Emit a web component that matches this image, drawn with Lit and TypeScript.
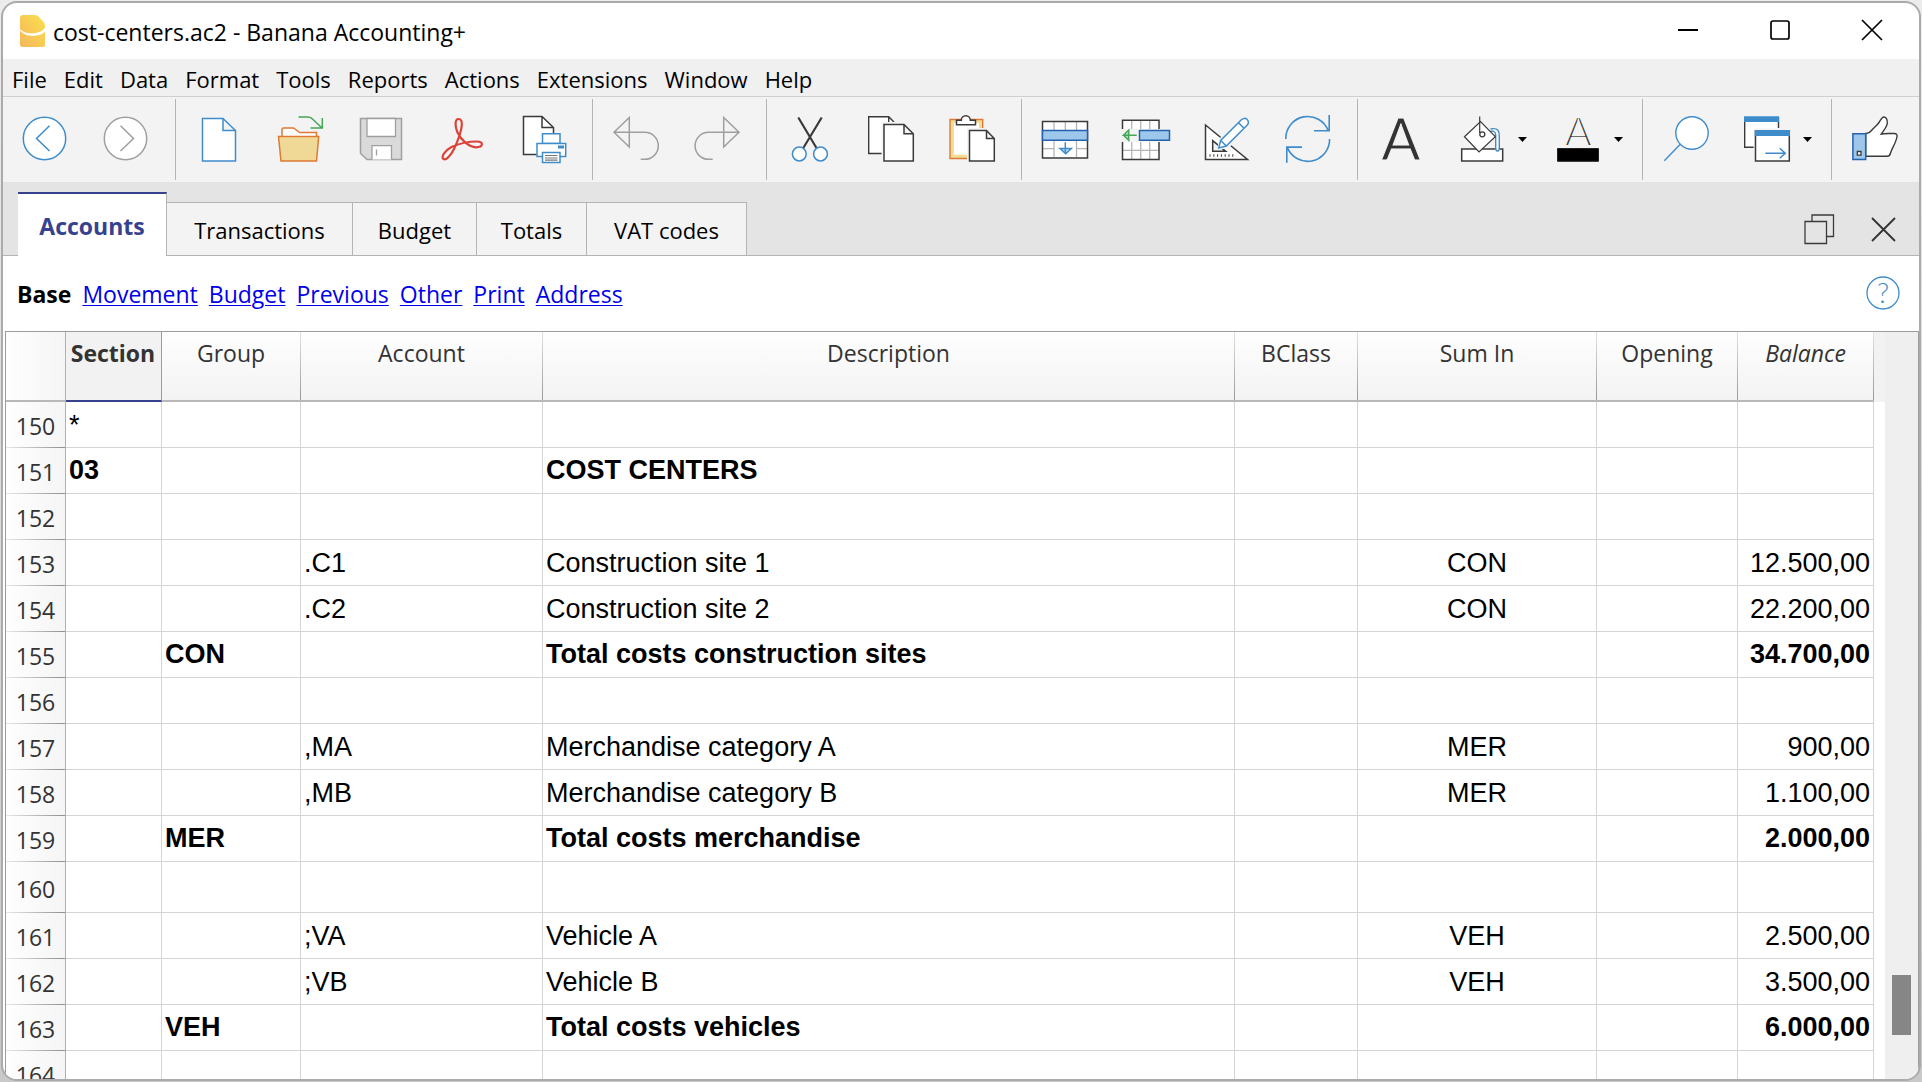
import { LitElement, html, svg, css, nothing } from "lit";
import type { SVGTemplateResult } from "lit";
import { customElement, property, state } from "lit/decorators.js";
import { classMap } from "lit/directives/class-map.js";

const BLUE = "#3f8ccb";
const DARK = "#3a3a3a";
const GREY = "#9f9f9f";

const icons: Record<string, SVGTemplateResult> = {
  back: svg`<g stroke=${BLUE} stroke-width="1.5">
    <circle cx="24.5" cy="23.5" r="21.2" fill="#fff"/><path d="M29.5 10.7L16.5 23.5L29.5 36"/></g>`,
  forward: svg`<g stroke=${GREY} stroke-width="1.5">
    <circle cx="24.5" cy="23.5" r="21.2" fill="#fff"/><path d="M19.5 10.7L32.5 23.5L19.5 36"/></g>`,
  create: svg`<path d="M8.5 3.5H29L41.5 15.5V46H8.5Z M29 3.5V15.5H41.5" fill="#fff" stroke=${BLUE} stroke-width="1.5"/>`,
  open: svg`<path d="M7 21.500V14.500Q7 13 8.500 13H18Q19 13 20 14L24.500 17.500H41.500V21.500" fill="#fff" stroke="#dd7a35" stroke-width="1.5"/>
    <path d="M3.500 21.500H43.700L41.500 46H6Z" fill="#f0d996" stroke="#dd7a35" stroke-width="1.5"/>
    <path d="M23.500 2H33Q36 2 38 4.500L47 13M47.300 3V13H35.500" stroke="#46a758" stroke-width="1.5"/>`,
  save: svg`<path d="M4.500 3.500H45.500V44.500H11L4.500 38.500Z" fill="#dadada" stroke=${GREY} stroke-width="1.5"/>
    <path d="M11 3.500H39.500V21.500H11ZM16 44.500V30.700H35.500V44.500" fill="#fff" stroke=${GREY} stroke-width="1.3"/>
    <path d="M20.500 34.500V40.500" stroke=${GREY} stroke-width="1.3"/>`,
  pdf: svg`<path d="M21.500 4C17.500 4 18 12 20.500 17.500C24 25 32 32 39 32.300C46.500 32.300 47 26.500 40 26.500C31 26.500 21 29 14.500 32C8 35.500 3.500 42 6.500 44C9 46 14 40 17 34C20 28 24.500 16 24.800 10C25 6 24 4 21.500 4Z" stroke="#dc4238" stroke-width="2.200"/>`,
  print: svg`<path d="M18.500 39.500H5.500V1.500H23L35.500 13V39.500Z" fill="#fff"/>
    <path d="M18.500 39.500H5.500V1.500H24L35.500 12.500V18M24 1.500V12.500H35.500" stroke=${DARK} stroke-width="1.5"/>
    <g fill="#fff" stroke=${BLUE} stroke-width="1.5"><path d="M24.500 18.700H42V28.500H24.500Z"/><path d="M19 28.500H47.700V41.500H19Z"/><path d="M24.500 37.500H42V47.500H24.500Z"/></g>
    <path d="M40 32H46" stroke=${BLUE} stroke-width="3"/><path d="M27 40.500H39.500M27 43H39.500M27 45.200H39.500" stroke="#777" stroke-width="1.2"/>`,
  undo: svg`<path d="M18.300 2.500V32L3 17.300ZM3 17.300H33.800A13.500 13.500 0 0 1 33.800 44.300H29.700" stroke=${GREY} stroke-width="1.5"/>`,
  redo: svg`<path d="M31.700 2.500V32L47 17.300ZM47 17.300H16.600A13.500 13.500 0 0 0 16.600 44.300H20.700" stroke=${GREY} stroke-width="1.5"/>`,
  cut: svg`<path d="M13.300 2.500L31.500 33M36.700 2.500L18.300 33" stroke=${DARK} stroke-width="2.2"/>
    <g fill="#fff" stroke=${BLUE} stroke-width="1.5"><circle cx="14.3" cy="39" r="6.9"/><circle cx="35.5" cy="39" r="6.9"/></g>`,
  copy: svg`<path d="M2.700 1.700H22.700L28 7V38.500H2.700Z" fill="#fff"/>
    <path d="M16 38.500H2.700V1.700H22.700L28 7M22.700 1.700V7" stroke=${DARK} stroke-width="1.4"/>
    <path d="M15.500 7H40V40H15.500Z" fill="#f3f3f3"/>
    <path d="M18 9.500H38L47.300 18.700V46H18ZM38 9.500V18.700H47.300" fill="#fff" stroke=${DARK} stroke-width="1.5"/>`,
  paste: svg`<path d="M3 4.500H35.700V43.500H3Z" fill="#f3dc96" stroke="#dd7a35" stroke-width="1.4"/>
    <path d="M7 8H32V39.700H7Z" fill="#fff"/><path d="M20 13H49V47H20Z" fill="#f3f3f3"/>
    <path d="M9.500 5.300H14.300A4.500 4.500 0 0 1 23.300 5.300H28.500V9.700H9.500Z" fill="#fff" stroke=${DARK} stroke-width="1.5"/>
    <path d="M22.500 15.500H39.500L47.300 23.500V46H22.500ZM39.500 15.500V23.500H47.300" fill="#fff" stroke=${DARK} stroke-width="1.5"/>`,
  addRows: svg`<path d="M2.500 6.500H47.500V43H2.500Z" fill="#fff"/>
    <path d="M14 7V15M25.300 7V15M36.500 7V15M14 26V42M36.500 26V42M3 33.700H14M36.500 33.700H47" stroke="#b5b5b5" stroke-width="1.3"/>
    <path d="M2.500 6.500H47.500V43H2.500Z" stroke=${DARK} stroke-width="1.5"/>
    <path d="M2.500 15.500H47.500V25.300H2.500Z" fill="#9dc8ec" stroke="#2462ae" stroke-width="1.5"/>
    <path d="M25.300 27.300V38M20 33.500H31.300L25.700 38.700Z" fill="#b9dcf5" stroke=${BLUE} stroke-width="1.5"/>`,
  insertRows: svg`<path d="M1.500 5.300H38V14H1.500ZM1.500 27H38V44.500H1.500Z" fill="#fff"/>
    <path d="M10.700 6V14M19.700 6V14M28.700 6V14M10.700 27V44M19.700 27V44M28.700 27V44M2 35.300H38" stroke="#b5b5b5" stroke-width="1.3"/>
    <path d="M1.500 14V5.300H38V14M1.500 27V44.500H38V27" stroke=${DARK} stroke-width="1.5"/>
    <path d="M18.500 15.500H48.500V25.300H18.500Z" fill="#9dc8ec" stroke="#2462ae" stroke-width="1.5"/>
    <path d="M15.700 20.200H2.500L7.700 15V25.300L2.500 20.200" stroke="#46a758" stroke-width="1.5" fill="#b5dfbd"/>`,
  checkup: svg`<path d="M3.500 10V44.500H45.500Z" fill="#fff" stroke=${DARK} stroke-width="1.5"/>
    <path d="M10.700 25.700V36.300H23.700Z" fill="#f3f3f3" stroke=${DARK} stroke-width="1.5"/>
    <path d="M7.500 40.500H33" stroke=${DARK} stroke-width="2.5" stroke-dasharray="1 2.8"/>
    <path d="M15 35L17 24L39 1.500L48 8L27 33Z" fill="#f3f3f3"/>
    <path d="M16.700 33L18.700 25.500L39.600 4.600A3.700 3.700 0 0 1 45.300 10L24.300 31ZM36.500 7.700L42 13.200M18.700 25.500L24.300 31" fill="#fff" stroke=${BLUE} stroke-width="1.5"/>`,
  refresh: svg`<path d="M2.800 24A21.900 21.900 0 0 1 45.200 15.700M46.200 0V15.700H31M46.600 24A21.900 21.900 0 0 1 4.200 32.100M3.800 47.700V32.100H19" stroke=${BLUE} stroke-width="1.6"/>`,
  font: svg`<text class="glyph" x="25" y="45" font-size="58" text-anchor="middle">A</text>`,
  fill: svg`<path d="M4.700 34H45.700V46H4.700Z" fill="#fff" stroke=${DARK} stroke-width="1.5"/>
    <path d="M33.500 14C41 12.500 42.300 16 42.300 21V33C42.300 37 38.700 37 38.700 33V20C38.700 16 36 16 33.500 16" fill="#fff" stroke=${BLUE} stroke-width="1.4"/>
    <path d="M7.500 21.700L23.500 6.500L38.300 21.700L22 37Z" fill="#fff" stroke=${DARK} stroke-width="1.2"/>
    <path d="M22.700 1.500V18" stroke=${DARK} stroke-width="1.2"/><circle cx="25.3" cy="19.3" r="2.5" stroke=${DARK} stroke-width="1.3" fill="#fff"/>`,
  color: svg`<text class="glyph fine" x="25.5" y="31" font-size="41" text-anchor="middle">A</text>
    <path d="M4.500 33.500H45.500V46.300H4.500Z" fill="#000" stroke="#222"/>`,
  search: svg`<g stroke=${BLUE} stroke-width="1.4"><circle cx="31" cy="18" r="16.2" fill="#fff"/><path d="M19.300 29.300L3.300 45.700"/></g>`,
  windows: svg`<path d="M2.700 2H36.700V32.300H2.700Z" fill="#fff"/><path d="M11.700 32.300H2.700V2M36.500 2V13" stroke=${DARK} stroke-width="1.4"/>
    <path d="M2 1.300H37V7H2Z" fill=${BLUE}/><path d="M12 13.500H40V38H12Z" fill="#f3f3f3"/>
    <path d="M13.500 16H47.300V46H13.500Z" fill="#fff" stroke=${DARK} stroke-width="1.5"/><path d="M12.800 15H48V21H12.800Z" fill=${BLUE}/>
    <path d="M23.300 38.300H43.300M37.700 33.300L43.300 38.300L37.700 43.300" stroke=${BLUE} stroke-width="1.5"/>`,
  like: svg`<path d="M15.700 18.500C19 18.800 20 17.500 21.500 15.500C24 12.500 27 10.500 29 7.500C31 4.500 32 2 33.700 2C36 2 37.500 4.500 37.300 8C37 12 34.500 14 31.300 19C35 18.200 39 18.500 44 18.500Q47.500 18.500 47 21.500C46 28 42 33 40.500 38Q39.800 41.300 37 41.300H15.700Z" fill="#fff" stroke=${DARK} stroke-width="1.4"/>
    <path d="M2.900 18.700H15.700V44.500H2.900Z" fill="#9dc8ec" stroke="#2462ae" stroke-width="1.5"/><path d="M7.300 36.500H11V40.200H7.300Z" fill="#fff" stroke=${DARK} stroke-width="1.3"/>`,
};

interface Tool { icon: string; label: string; menu?: boolean }

const toolGroups: Tool[][] = [
  [{ icon: "back", label: "Back" }, { icon: "forward", label: "Forward" }],
  [
    { icon: "create", label: "New" }, { icon: "open", label: "Open" }, { icon: "save", label: "Save" },
    { icon: "pdf", label: "Create PDF" }, { icon: "print", label: "Print preview" },
  ],
  [{ icon: "undo", label: "Undo" }, { icon: "redo", label: "Redo" }],
  [{ icon: "cut", label: "Cut" }, { icon: "copy", label: "Copy" }, { icon: "paste", label: "Paste" }],
  [
    { icon: "addRows", label: "Add rows" }, { icon: "insertRows", label: "Insert copied rows" },
    { icon: "checkup", label: "Check accounting" }, { icon: "refresh", label: "Recalculate" },
  ],
  [
    { icon: "font", label: "Font" }, { icon: "fill", label: "Background color", menu: true },
    { icon: "color", label: "Text color", menu: true },
  ],
  [{ icon: "search", label: "Find" }, { icon: "windows", label: "Switch window", menu: true }],
  [{ icon: "like", label: "Feedback" }],
];

const menus = ["File", "Edit", "Data", "Format", "Tools", "Reports", "Actions", "Extensions", "Window", "Help"];
const tabs = ["Accounts", "Transactions", "Budget", "Totals", "VAT codes"];
const views = ["Movement", "Budget", "Previous", "Other", "Print", "Address"];

interface Row {
  n: number; section?: string; group?: string; account?: string; description?: string;
  sumIn?: string; balance?: string; bold?: boolean; tall?: boolean;
}

const rows: Row[] = [
  { n: 150, section: "*" },
  { n: 151, section: "03", description: "COST CENTERS", bold: true },
  { n: 152 },
  { n: 153, account: ".C1", description: "Construction site 1", sumIn: "CON", balance: "12.500,00" },
  { n: 154, account: ".C2", description: "Construction site 2", sumIn: "CON", balance: "22.200,00" },
  { n: 155, group: "CON", description: "Total costs construction sites", balance: "34.700,00", bold: true },
  { n: 156 },
  { n: 157, account: ",MA", description: "Merchandise category A", sumIn: "MER", balance: "900,00" },
  { n: 158, account: ",MB", description: "Merchandise category B", sumIn: "MER", balance: "1.100,00" },
  { n: 159, group: "MER", description: "Total costs merchandise", balance: "2.000,00", bold: true },
  { n: 160, tall: true },
  { n: 161, account: ";VA", description: "Vehicle A", sumIn: "VEH", balance: "2.500,00" },
  { n: 162, account: ";VB", description: "Vehicle B", sumIn: "VEH", balance: "3.500,00" },
  { n: 163, group: "VEH", description: "Total costs vehicles", balance: "6.000,00", bold: true },
  { n: 164 },
];

const resetButton = css`
  button {
    font: inherit;
    color: inherit;
    background: none;
    border: 0;
    padding: 0;
    margin: 0;
  }
  svg {
    display: block;
    fill: none;
    overflow: visible;
  }
`;

@customElement("tool-bar")
export class ToolBar extends LitElement {
  static styles = [
    resetButton,
    css`
      :host {
        display: flex;
        flex: none;
        height: 85px;
        padding-left: 1px;
        background: #f3f3f3;
        border-top: 1px solid #d0d0d0;
      }
      .group {
        display: flex;
        align-items: center;
      }
      .group + .group::before {
        content: "";
        width: 1px;
        height: 81px;
        margin: 0 2px 0 9px;
        background: #b4b4b4;
      }
      .tool {
        display: flex;
        align-items: center;
        padding: 0 16px;
        height: 81px;
      }
      .tool.menu {
        padding-right: 10px;
        gap: 12px;
      }
      .glyph {
        font-family: Lato, "Open Sans", sans-serif;
        fill: #333;
        stroke: #f3f3f3;
        stroke-width: 1px;
      }
      .fine {
        stroke-width: 2px;
      }
    `,
  ];

  render() {
    return toolGroups.map(
      (group) => html`<div class="group">
        ${group.map(
          (t) => html`<button class=${classMap({ tool: true, menu: !!t.menu })} aria-label=${t.label}>
            <svg width="49" height="49" viewBox="0 0 49 49">${icons[t.icon]}</svg>
            ${t.menu
              ? html`<svg width="9" height="5" viewBox="0 0 9 5"><path d="M0 0H9L4.5 5Z" fill="#000"/></svg>`
              : nothing}
          </button>`
        )}
      </div>`
    );
  }
}

@customElement("accounts-table")
export class AccountsTable extends LitElement {
  @property({ attribute: false }) rows: Row[] = [];

  static styles = css`
    :host {
      display: flex;
      flex: 1;
      min-height: 0;
      overflow: hidden;
      margin-left: 2px;
      border: 1px solid #9c9c9c;
      border-bottom: 0;
    }
    .viewport {
      flex: 1;
      min-width: 0;
      overflow: hidden;
    }
    table {
      width: 100%;
      table-layout: fixed;
      border-collapse: separate;
      border-spacing: 0;
      font-family: "Liberation Sans", Arial, sans-serif;
      font-size: 27px;
      line-height: 32px;
      color: #000;
    }
    .c-row { width: 60px; }
    .c-section { width: 96px; }
    .c-group { width: 139px; }
    .c-account { width: 242px; }
    .c-class { width: 123px; }
    .c-sum { width: 239px; }
    .c-opening { width: 141px; }
    .c-balance { width: 136px; }
    .c-end { width: 11px; }
    th {
      font-family: "Open Sans", "Noto Sans", sans-serif;
      font-size: 23px;
      font-weight: 400;
      color: #333;
      box-sizing: border-box;
    }
    thead th {
      height: 70px;
      padding: 5px 1px 0 0;
      vertical-align: top;
      border-bottom: 2px solid #b8b8b8;
      background:
        linear-gradient(#e2e2e2, #999) right / 1px 100% no-repeat,
        linear-gradient(#fefefe, #f3f3f3);
    }
    thead .corner {
      background: linear-gradient(90deg, #fefefe, #f5f5f5);
      border-right: 1px solid #b0b0b0;
    }
    thead .current {
      font-weight: 700;
      background: #f2f2f2;
      border-right: 1px solid #9c9c9c;
      border-bottom-color: #37428f;
    }
    thead .computed {
      font-style: italic;
    }
    thead .end {
      background: #f2f2f2;
      border-bottom-color: #f2f2f2;
    }
    tbody th {
      height: 46px;
      padding: 2px 0 0;
      border-right: 1px solid #b0b0b0;
      background:
        linear-gradient(90deg, #e8e8e8, #8f8f8f) bottom / 100% 1px no-repeat,
        linear-gradient(90deg, #fefefe, #f5f5f5);
    }
    td {
      height: 46px;
      box-sizing: border-box;
      padding: 0 3px;
      border-right: 1px solid #d4d4d4;
      border-bottom: 1px solid #d4d4d4;
      white-space: nowrap;
    }
    .tall th,
    .tall td {
      height: 51px;
    }
    .bold td {
      font-weight: 700;
      padding-bottom: 2px;
    }
    .center { text-align: center; }
    .right { text-align: right; }
    td.end { border: 0; padding: 0; }
    .track {
      display: flex;
      flex-direction: column;
      align-items: center;
      width: 33px;
      background: #efefef;
    }
    .track::before { content: ""; flex: 643; }
    .track::after { content: ""; flex: 44; }
    .thumb {
      width: 19px;
      height: 60px;
      background: #868686;
    }
  `;

  render() {
    return html`
      <div class="viewport">
        <table>
          <colgroup>
            <col class="c-row" /><col class="c-section" /><col class="c-group" /><col class="c-account" /><col />
            <col class="c-class" /><col class="c-sum" /><col class="c-opening" /><col class="c-balance" /><col class="c-end" />
          </colgroup>
          <thead>
            <tr>
              <th class="corner"></th>
              <th class="current" scope="col">Section</th>
              <th scope="col">Group</th>
              <th scope="col">Account</th>
              <th scope="col">Description</th>
              <th scope="col">BClass</th>
              <th scope="col">Sum In</th>
              <th scope="col">Opening</th>
              <th class="computed" scope="col">Balance</th>
              <th class="end"></th>
            </tr>
          </thead>
          <tbody>
            ${this.rows.map(
              (r) => html`<tr class=${classMap({ bold: !!r.bold, tall: !!r.tall })}>
                <th scope="row">${r.n}</th>
                <td>${r.section}</td>
                <td>${r.group}</td>
                <td>${r.account}</td>
                <td>${r.description}</td>
                <td></td>
                <td class="center">${r.sumIn}</td>
                <td></td>
                <td class="right">${r.balance}</td>
                <td class="end"></td>
              </tr>`
            )}
          </tbody>
        </table>
      </div>
      <div class="track"><div class="thumb"></div></div>
    `;
  }
}

@customElement("app-root")
export class AppRoot extends LitElement {
  @state() private activeTab = "Accounts";

  static styles = [
    resetButton,
    css`
      :host {
        display: block;
        box-sizing: border-box;
        height: 100vh;
        padding: 1px;
        background: linear-gradient(#ececec, #c9c9c9);
        font-family: "Open Sans", "Noto Sans", sans-serif;
        font-size: 23px;
        line-height: 32px;
        color: #000;
      }
      .window {
        display: flex;
        flex-direction: column;
        box-sizing: border-box;
        height: 100%;
        overflow: hidden;
        background: #fff;
        border: 2px solid #ababab;
        border-radius: 16px;
      }
      .title-bar {
        display: flex;
        flex: none;
        align-items: center;
        height: 56px;
        padding: 0 1px 0 17px;
      }
      .title {
        flex: 1;
        margin: 0 0 0 8px;
        padding-top: 2px;
        font-size: inherit;
        font-weight: 400;
      }
      .caption {
        display: grid;
        place-items: center;
        align-self: flex-start;
        width: 92px;
        height: 54px;
      }
      .menu-bar {
        display: flex;
        flex: none;
        gap: 17px;
        box-sizing: border-box;
        height: 37px;
        padding: 2px 0 0 9px;
        align-items: center;
        font-size: 22px;
        background: #f0f0f0;
      }
      .tab-bar {
        display: flex;
        flex: none;
        align-items: flex-end;
        height: 74px;
        padding-left: 15px;
        background: linear-gradient(#b4b4b4, #b4b4b4) bottom / 100% 1px no-repeat, #e4e4e4;
      }
      .tabs {
        display: grid;
        grid-template-columns: 149px 186px 124px 110px 160px;
        align-items: end;
        flex: 1;
      }
      .tabs .tab {
        height: 54px;
        padding-top: 2px;
        font-size: 22px;
        background: #f3f3f3;
        border: 1px solid #b4b4b4;
        border-left: 0;
      }
      .tabs .tab.active {
        height: 64px;
        background: #fff;
        border-top: 2px solid #37428f;
        border-bottom: 0;
        font-size: 23px;
        font-weight: 700;
        color: #37428f;
      }
      .pane-tools {
        display: flex;
        align-items: center;
        gap: 36px;
        height: 54px;
        padding-right: 23px;
      }
      .views {
        display: flex;
        flex: none;
        align-items: center;
        gap: 11px;
        height: 75px;
        padding: 0 19px 0 14px;
      }
      .views a {
        color: #0000e8;
        text-decoration: underline;
        text-decoration-thickness: 1px;
        text-underline-offset: 2px;
      }
      .help {
        margin-left: auto;
        padding-bottom: 2px;
      }
      .mark {
        font-family: Lato, "Open Sans", sans-serif;
        font-weight: 300;
        fill: #3f8ccb;
      }
    `,
  ];

  render() {
    return html`
      <div class="window">
        <header class="title-bar">
          <svg width="25" height="33" viewBox="0 0 25 33">
            <defs>
              <linearGradient id="peel" x1="0" y1="1" x2="1" y2="0">
                <stop offset="0" stop-color="#f5b65c" /><stop offset="1" stop-color="#fae04d" />
              </linearGradient>
            </defs>
            <path d="M3 0H15Q17 0 18.5 1.5L24 7.5Q25 9 25 11V29.5Q25 32 22.5 32H3Q0 32 0 29.5V3Q0 0 3 0Z" fill="url(#peel)" />
            <path d="M0 14C4 19.5 20 20.5 25 12.5V16.5C20 22.5 5 22.5 0 15.5Z" fill="#fff" />
          </svg>
          <h1 class="title">cost-centers.ac2 - Banana Accounting+</h1>
          <button class="caption" aria-label="Minimize">
            <svg width="20" height="20" stroke="#000" stroke-width="2"><path d="M0 10H20" /></svg>
          </button>
          <button class="caption" aria-label="Maximize">
            <svg width="20" height="20" stroke="#000" stroke-width="1.7"><rect x="1" y="1" width="18" height="18" rx="2" /></svg>
          </button>
          <button class="caption" aria-label="Close">
            <svg width="20" height="20" stroke="#000" stroke-width="1.7"><path d="M0 0L20 20M20 0L0 20" /></svg>
          </button>
        </header>
        <nav class="menu-bar">${menus.map((m) => html`<button>${m}</button>`)}</nav>
        <tool-bar></tool-bar>
        <div class="tab-bar">
          <div class="tabs" role="tablist">
            ${tabs.map(
              (t) => html`<button
                role="tab"
                aria-selected=${t === this.activeTab ? "true" : "false"}
                class=${classMap({ tab: true, active: t === this.activeTab })}
                @click=${() => (this.activeTab = t)}
              >${t}</button>`
            )}
          </div>
          <div class="pane-tools">
            <button aria-label="Restore pane">
              <svg width="31" height="31" stroke="#3a3a3a" stroke-width="1.3">
                <path d="M8 7.5V1H29.5V22.5H23" /><path d="M1 7.5H22.5V29.5H1Z" />
              </svg>
            </button>
            <button aria-label="Close pane">
              <svg width="25" height="25" stroke="#333" stroke-width="1.8"><path d="M1 1L24 24M24 1L1 24" /></svg>
            </button>
          </div>
        </div>
        <nav class="views">
          <strong>Base</strong>
          ${views.map((v) => html`<a href="#">${v}</a>`)}
          <button class="help" aria-label="Help">
            <svg width="34" height="34">
              <circle cx="17" cy="17" r="16" stroke="#3f8ccb" stroke-width="1.3" />
              <text class="mark" x="17" y="27" font-size="28" text-anchor="middle">?</text>
            </svg>
          </button>
        </nav>
        <accounts-table .rows=${rows}></accounts-table>
      </div>
    `;
  }
}
